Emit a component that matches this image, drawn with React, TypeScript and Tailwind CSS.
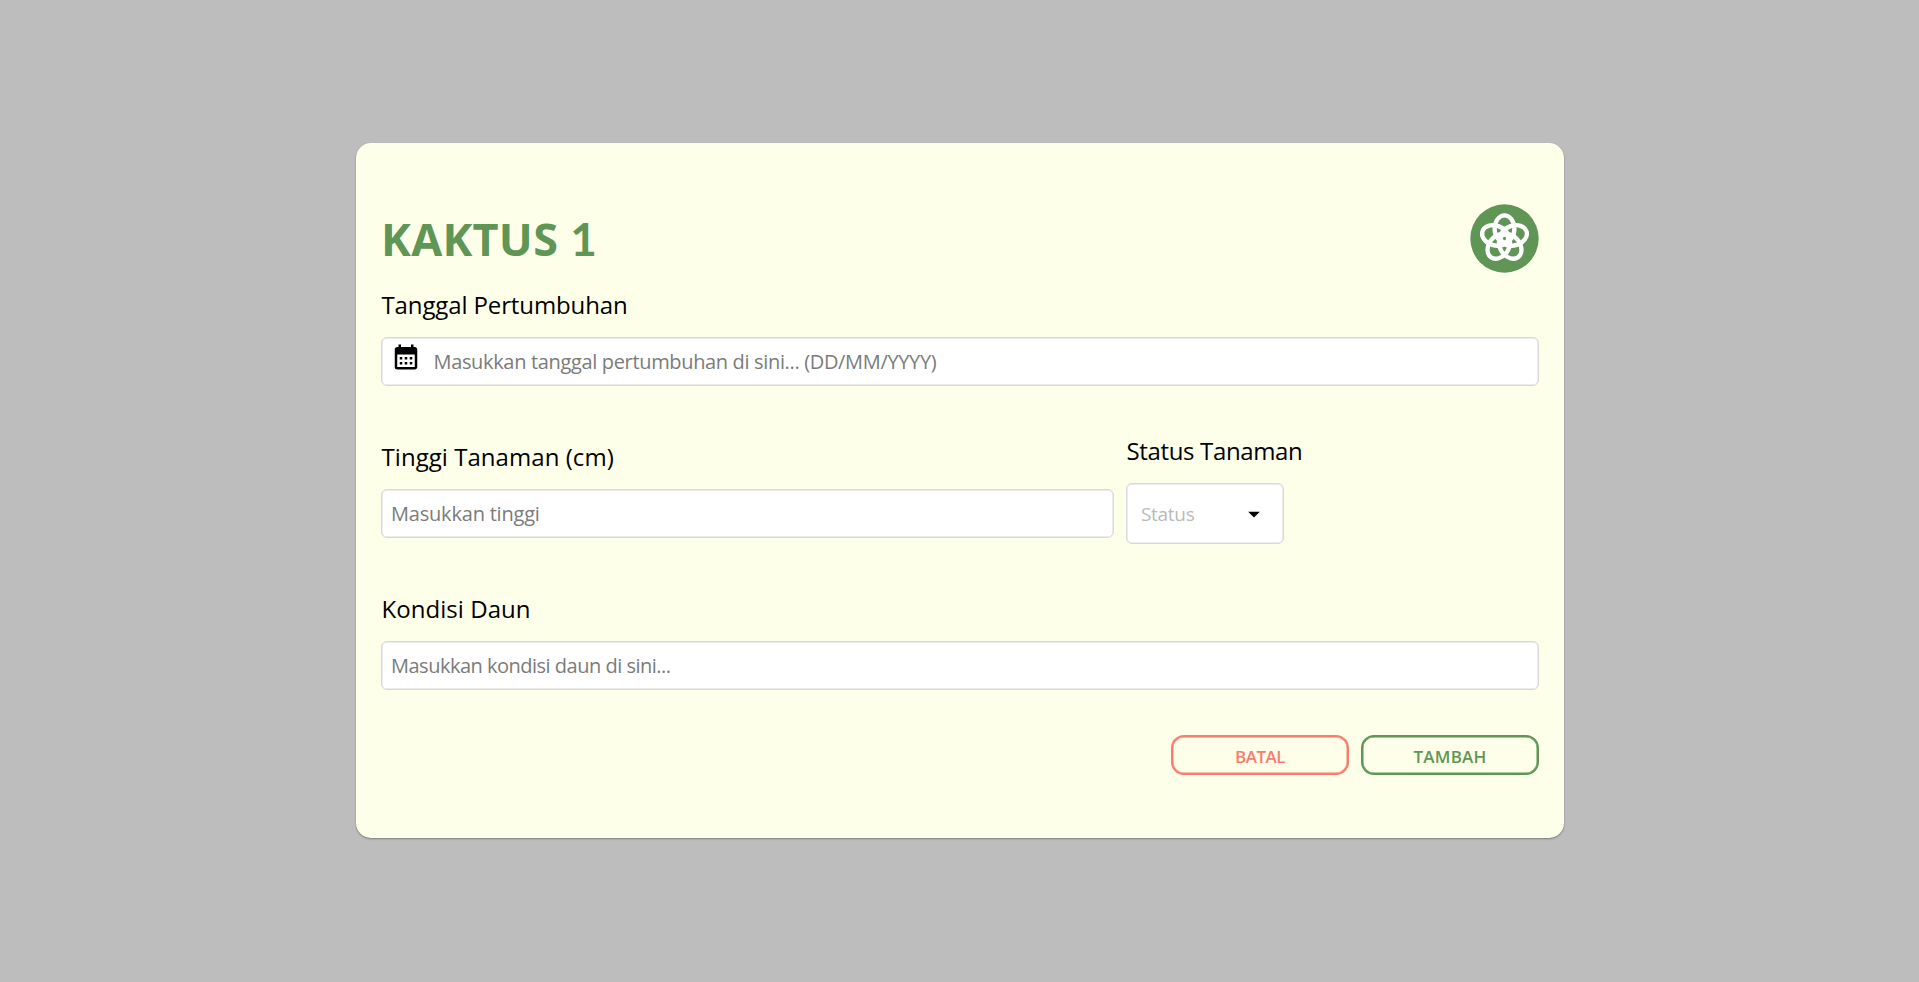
import { MdArrowDropDown, MdCalendarMonth } from 'react-icons/md';
import type { ReactNode } from 'react';

const PETAL_ANGLES = [0, 72, 144, 216, 288];

function FlowerLogo() {
  return (
    <svg className="mb-[2px]" width="69" height="69" viewBox="-34.5 -34.5 69 69" role="img">
      <circle r="34.2" fill="#5f9656" />
      <g fill="none" stroke="#ffffff" strokeWidth="4.3">
        {PETAL_ANGLES.map((deg) => (
          <ellipse key={deg} cy="-9.7" rx="9.9" ry="13.5" transform={`rotate(${deg})`} />
        ))}
      </g>
    </svg>
  );
}

function Label({ children, className = '' }: { children: ReactNode; className?: string }) {
  return <label className={`block h-8 pl-[0.5px] text-[24px] leading-[30px] text-black ${className}`}>{children}</label>;
}

const boxClass = 'rounded-[6px] border border-[#d9d9dc] bg-white shadow-[inset_0_0_0_0.5px_#d9d9dc]';

const inputClass =
  'h-[49px] w-full pb-px text-[20px] text-black outline-none placeholder:text-[#7b7b7b] placeholder:opacity-100';

export default function App() {
  return (
    <main className="flex h-[982px] w-full justify-center bg-[#bdbdbd] pt-[143px] font-['Open_Sans','Noto_Sans',sans-serif]">
      <form className="ml-px h-[695px] w-[1208px] rounded-[15px] bg-[#feffe9] px-[25px] pt-[61px] shadow-[0_1px_2px_rgba(0,0,0,0.35)]">
        <header className="flex h-[70px] items-center justify-between">
          <h1 className="flex items-baseline text-[45px] leading-[60px] font-bold tracking-[0.25px] text-[#5f9656]">
            KAKTUS&nbsp;<span className="font-['Lato',sans-serif] text-[46px] font-bold">1</span>
          </h1>
          <FlowerLogo />
        </header>

        <div className="mt-4">
          <Label className="tracking-[-0.12px]">Tanggal Pertumbuhan</Label>
          <div className={`${boxClass} mt-[15px] flex h-[49px] items-start pl-[9px]`}>
            <MdCalendarMonth className="mt-[3.5px] size-[30px] shrink-0 text-black" />
            <input
              className="ml-[12.5px] h-[47px] w-full bg-transparent pb-px text-[20px] tracking-[-0.34px] outline-none placeholder:text-[#7b7b7b] placeholder:opacity-100"
              placeholder="Masukkan tanggal pertumbuhan di sini... (DD/MM/YYYY)"
            />
          </div>
        </div>

        <div className="mt-[50px] flex items-start gap-3">
          <div className="mt-[6px] w-[733px]">
            <Label className="tracking-[0.05px]">Tinggi Tanaman (cm)</Label>
            <input className={`${boxClass} ${inputClass} mt-[15px] pl-[9px] tracking-[-0.2px]`} placeholder="Masukkan tinggi" />
          </div>
          <div>
            <Label className="tracking-[-0.35px]">Status Tanaman</Label>
            <button
              type="button"
              className={`${boxClass} mt-[15px] flex h-[61px] w-[158px] items-center justify-between pr-[15px] pl-[14px] text-[19px] tracking-[-0.3px] text-[#bababa]`}
            >
              <span className="pt-px">Status</span>
              <MdArrowDropDown className="size-7 text-black" />
            </button>
          </div>
        </div>

        <div className="mt-[50px]">
          <Label className="tracking-[0.05px]">Kondisi Daun</Label>
          <input
            className={`${boxClass} ${inputClass} mt-[15px] pl-[9px] tracking-[-0.5px]`}
            placeholder="Masukkan kondisi daun di sini..."
          />
        </div>

        <div className="mt-[45px] flex justify-end gap-3 text-[17px] font-semibold">
          <button
            type="button"
            className="h-10 w-[178px] rounded-[13px] border-2 border-[#f97b72] pt-[3px] tracking-[-0.5px] text-[#f97b72] shadow-[inset_0_0_0_0.5px_#f97b72]"
          >
            BATAL
          </button>
          <button
            type="button"
            className="h-10 w-[178px] rounded-[13px] border-2 border-[#5f9656] pt-[3px] tracking-[0.2px] text-[#5f9656] shadow-[inset_0_0_0_0.5px_#5f9656]"
          >
            TAMBAH
          </button>
        </div>
      </form>
    </main>
  );
}
